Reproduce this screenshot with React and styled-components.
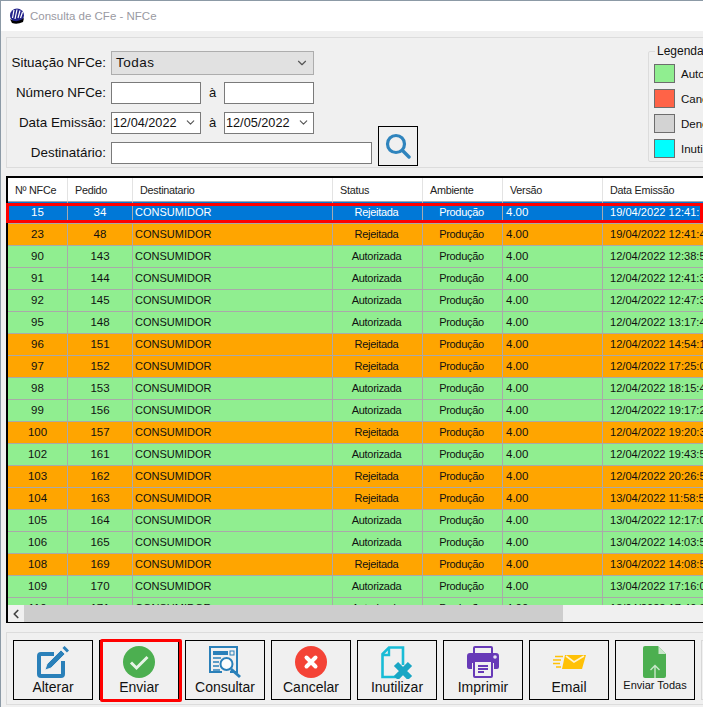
import React from "react";
import styled, { createGlobalStyle } from "styled-components";
import { FiChevronDown, FiChevronLeft } from "react-icons/fi";

const GlobalStyle = createGlobalStyle`
  html, body {
    margin: 0;
    padding: 0;
    width: 703px;
    height: 707px;
    overflow: hidden;
    background: #f0f0f0;
    font-family: "Liberation Sans", Arial, sans-serif;
  }
`;

const Window = styled.div`
  width: 703px;
  height: 707px;
  box-sizing: border-box;
  border-top: 1px solid #8c9aa6;
  border-left: 1px solid #8c9aa6;
  background: #f0f0f0;
  overflow: hidden;
`;

const TitleBar = styled.div`
  height: 30px;
  display: flex;
  align-items: center;
  gap: 5px;
  padding-left: 8px;
  background: #fff;
  font-size: 11.5px;
  color: #9a9aa2;
`;

const FilterPanel = styled.div`
  height: 131px;
  width: 720px;
  margin: 6px 0 0 5px;
  box-sizing: border-box;
  border: 1px solid #dcdcdc;
  display: flex;
  position: relative;
`;

const FilterForm = styled.div`
  display: flex;
  flex-direction: column;
  gap: 7px;
  padding: 13px 0 0 0;
`;

const FormRow = styled.div`
  display: flex;
  align-items: center;
  height: 23px;
`;

const FieldLabel = styled.label`
  width: 99px;
  margin-right: 5px;
  display: flex;
  justify-content: flex-end;
  font-size: 13.4px;
  color: #111;
  white-space: nowrap;
`;

const Select = styled.div`
  width: 203px;
  height: 24px;
  box-sizing: border-box;
  border: 1px solid #adadad;
  background: #e1e1e1;
  display: flex;
  align-items: center;
  justify-content: space-between;
  padding: 0 4px 0 4px;
  font-size: 13.5px;
  letter-spacing: 0.5px;
  color: #111;
`;

const Input = styled.div`
  width: ${({ $w }) => $w || 90}px;
  height: 22px;
  box-sizing: border-box;
  border: 1px solid #7a7a7a;
  background: #fff;
  display: flex;
  align-items: center;
  justify-content: space-between;
  padding: 0 3px 0 1px;
  font-size: 12.7px;
  color: #111;
`;

const Between = styled.span`
  width: 23px;
  text-align: center;
  font-size: 13px;
  color: #111;
`;

const SearchButton = styled.button`
  width: 40px;
  height: 40px;
  margin-left: 6px;
  margin-top: -14px;
  padding: 0;
  box-sizing: border-box;
  border: 1px solid #000;
  background: #f0f0f0;
  display: flex;
  align-items: center;
  justify-content: center;
`;

const Legend = styled.fieldset`
  position: absolute;
  left: 641px;
  top: 7px;
  width: 100px;
  height: 117px;
  margin: 0;
  padding: 0 0 0 5px;
  box-sizing: border-box;
  border: 1px solid #dcdcdc;
  border-radius: 2px;
  display: flex;
  flex-direction: column;
  gap: 6px;
`;

const LegendTitle = styled.legend`
  padding: 0 2px;
  margin-left: 1px;
  font-size: 12px;
  color: #111;
  line-height: 13px;
  white-space: nowrap;
`;

const LegendRow = styled.div`
  display: flex;
  align-items: center;
  gap: 6px;
  font-size: 11.5px;
  color: #111;
  white-space: nowrap;
  margin-top: ${({ $first }) => ($first ? 6 : 0)}px;
`;

const Swatch = styled.span`
  width: 21px;
  height: 19px;
  box-sizing: border-box;
  border: 1px solid #6d6d6d;
  background: ${({ $color }) => $color};
`;

const GridFrame = styled.div`
  width: 720px;
  height: 447px;
  margin: 8px 0 0 5px;
  box-sizing: border-box;
  border: 1px solid #000;
  border-top-width: 2px;
  border-left-width: 2px;
  display: flex;
  flex-direction: column;
  position: relative;
`;

const GridBody = styled.div`
  height: 403px;
  flex: none;
  overflow: hidden;
`;

const Row = styled.div`
  display: grid;
  grid-template-columns: 60px 65px 200px 90px 80px 100px 120px;
  height: ${({ $h }) => $h || 22}px;
  flex: none;
  box-sizing: border-box;
  font-size: 11.5px;
  color: ${({ $selected }) => ($selected ? "#fff" : "#111")};
  background: ${({ $bg }) => $bg};
`;

const HeadCell = styled.div`
  display: flex;
  align-items: center;
  padding-left: 7px;
  box-sizing: border-box;
  border-right: 1px solid #e3e3e3;
  border-bottom: 1px solid #a0a8b0;
  font-size: 10.8px;
  letter-spacing: -0.25px;
  color: #222;
  white-space: nowrap;
  overflow: hidden;
`;

const Cell = styled.div`
  display: flex;
  align-items: center;
  justify-content: ${({ $center }) => ($center ? "center" : "flex-start")};
  padding-left: ${({ $pad }) => $pad || 0}px;
  padding-bottom: 1px;
  box-sizing: border-box;
  border-right: 1px solid #a9a9a9;
  border-bottom: 1px solid #a9a9a9;
  white-space: nowrap;
  overflow: hidden;
`;

const WordCell = styled(Cell)`
  font-size: 11px;
  letter-spacing: ${({ $tight }) => ($tight ? -0.3 : 0)}px;
  padding-right: ${({ $tight }) => ($tight ? 2 : 0)}px;
`;

const DateCell = styled(Cell)`
  font-size: 11.1px;
`;

const SelectionOutline = styled.div`
  position: absolute;
  left: -2px;
  top: 25px;
  width: 697px;
  height: 20px;
  box-sizing: border-box;
  border: 3px solid #f00;
  pointer-events: none;
`;

const ScrollBar = styled.div`
  height: 17px;
  flex: none;
  display: flex;
  background: #f0f0f0;
`;

const ScrollArrow = styled.div`
  width: 16px;
  display: flex;
  align-items: center;
  justify-content: center;
  color: #444;
`;

const ScrollThumb = styled.div`
  width: 539px;
  background: #cdcdcd;
`;

const ActionPanel = styled.div`
  height: 73px;
  width: 720px;
  margin: 9px 0 0 5px;
  box-sizing: border-box;
  border: 1px solid #dcdcdc;
  padding: 7px 0 0 6px;
  display: flex;
  gap: 6px;
`;

const ActionButton = styled.button`
  width: 80px;
  height: 60px;
  flex: none;
  padding: 4px 0 0;
  box-sizing: border-box;
  border: 1px solid ${({ $ghost }) => ($ghost ? "#d8d8d8" : "#000")};
  background: #f0f0f0;
  display: flex;
  flex-direction: column;
  align-items: center;
  justify-content: flex-start;
  font-family: inherit;
  font-size: ${({ $small }) => ($small ? 11 : 14)}px;
  color: #111;
  white-space: nowrap;
  position: relative;
`;

const ActiveMark = styled.span`
  position: absolute;
  left: 0;
  top: -2px;
  width: 82px;
  height: 63px;
  box-sizing: border-box;
  border: 3px solid #f00;
  border-radius: 2px;
`;

const IconSlot = styled.div`
  height: 34px;
  display: flex;
  align-items: center;
  justify-content: center;
`;

const GREEN = "#90ee90";
const ORANGE = "#ffa500";
const BLUE = "#0078d7";

const rows = [
  [15, 34, "R", "19/04/2022 12:41:3"],
  [23, 48, "R", "19/04/2022 12:41:4"],
  [90, 143, "A", "12/04/2022 12:38:5"],
  [91, 144, "A", "12/04/2022 12:41:3"],
  [92, 145, "A", "12/04/2022 12:47:3"],
  [95, 148, "A", "12/04/2022 13:17:4"],
  [96, 151, "R", "12/04/2022 14:54:1"],
  [97, 152, "R", "12/04/2022 17:25:0"],
  [98, 153, "A", "12/04/2022 18:15:4"],
  [99, 156, "A", "12/04/2022 19:17:2"],
  [100, 157, "R", "12/04/2022 19:20:3"],
  [102, 161, "A", "12/04/2022 19:43:5"],
  [103, 162, "R", "12/04/2022 20:26:5"],
  [104, 163, "R", "13/04/2022 11:58:5"],
  [105, 164, "A", "13/04/2022 12:17:0"],
  [106, 165, "A", "13/04/2022 14:03:5"],
  [108, 169, "R", "13/04/2022 14:08:5"],
  [109, 170, "A", "13/04/2022 17:16:0"],
  [110, 171, "A", "13/04/2022 17:40:2"],
];

const columns = ["Nº NFCe", "Pedido", "Destinatario", "Status", "Ambiente", "Versão", "Data Emissão"];

const legend = [
  ["Autorizada", GREEN],
  ["Cancelada", "#ff6347"],
  ["Denegada", "#d3d3d3"],
  ["Inutilizada", "#00ffff"],
];

function AppLogo() {
  return (
    <svg width="16" height="16" viewBox="0 0 16 16">
      <circle cx="8" cy="7.500" r="7" fill="#22228a" />
      <path d="M1 11 Q8 16 15 10 L14 14 Q8 17 3 15 Z" fill="#000" />
      <path d="M5 2 L3.500 10 M8 1.500 L6 11 M11 2.500 L9 10 M13.500 4 L11.500 10" stroke="#fff" strokeWidth="1.2" fill="none" />
    </svg>
  );
}

function SearchIcon() {
  return (
    <svg width="26" height="26" viewBox="0 0 26 26" fill="none">
      <circle cx="11" cy="11" r="8.500" stroke="#2f84bd" strokeWidth="3.2" />
      <path d="M17.500 17.500 L24 24" stroke="#2f84bd" strokeWidth="3.400" strokeLinecap="round" />
    </svg>
  );
}

function EditIcon() {
  return (
    <svg width="32" height="32" viewBox="0 0 32 32" fill="none">
      <path d="M17 8 H4 Q2 8 2 10 V28 Q2 30 4 30 H24 Q26 30 26 28 V15" stroke="#2a80b9" strokeWidth="4" />
      <path d="M24 4 L10 18 L8 24 L14 22 L28 8 Z" fill="#2a80b9" stroke="#f0f0f0" strokeWidth="0.8" />
      <path d="M26.500 1 L31 5.500" stroke="#2a80b9" strokeWidth="3" />
    </svg>
  );
}

function CheckIcon() {
  return (
    <svg width="32" height="32" viewBox="0 0 32 32" fill="none">
      <circle cx="16" cy="16" r="16" fill="#4caf50" />
      <path d="M8 16.500 L13.500 22 L24.500 11" stroke="#e6f4e6" strokeWidth="3" />
    </svg>
  );
}

function ConsultIcon() {
  return (
    <svg width="33" height="33" viewBox="0 0 33 33" fill="none">
      <path d="M0 0 H29 V27 H21 V25 H27 V2 H2 V25 H13 V27 H0 Z" fill="#2a80b9" />
      <rect x="4" y="5" width="15" height="4" fill="#2a80b9" />
      <rect x="21" y="5" width="4" height="4" stroke="#2a80b9" strokeWidth="1" />
      <path d="M4 12 H12 M4 16 H10 M4 20 H10 M4 24 H11" stroke="#2a80b9" strokeWidth="1.400" />
      <circle cx="17.500" cy="18" r="6" fill="#fdfdfd" stroke="#2a80b9" strokeWidth="2" />
      <path d="M22 23 L31 31" stroke="#2a80b9" strokeWidth="3" />
    </svg>
  );
}

function CancelIcon() {
  return (
    <svg width="32" height="32" viewBox="0 0 32 32" fill="none">
      <circle cx="16" cy="16" r="16" fill="#f44336" />
      <path d="M11.500 11.500 L20.500 20.500 M20.500 11.500 L11.500 20.500" stroke="#fff" strokeWidth="4" strokeLinecap="round" />
    </svg>
  );
}

function VoidIcon() {
  return (
    <svg width="32" height="33" viewBox="0 0 32 33" fill="none">
      <path d="M22 19 V1.500 H8 L1.500 8 V31 H16" stroke="#19bcd6" strokeWidth="2.600" />
      <path d="M8 2 V9 H2" stroke="#19bcd6" strokeWidth="2.400" />
      <path d="M15 18 L29 32 M29 18 L15 32" stroke="#19a6c4" strokeWidth="6" />
    </svg>
  );
}

function PrintIcon() {
  return (
    <svg width="32" height="32" viewBox="0 0 32 32" fill="none">
      <path d="M7 7 V2 Q7 1 8 1 H24 Q25 1 25 2 V7" stroke="#673ab7" strokeWidth="2" />
      <path d="M3 7 H29 Q32 7 32 10 V21 Q32 23 30 23 H27 V17 H5 V23 H2 Q0 23 0 21 V10 Q0 7 3 7 Z" fill="#673ab7" />
      <circle cx="28" cy="11" r="1.800" fill="#e9e4f5" />
      <rect x="7" y="15" width="18" height="16" rx="1" fill="#f0f0f0" stroke="#673ab7" strokeWidth="2" />
      <path d="M11 20 H21 M11 23 H21 M11 26 H17" stroke="#673ab7" strokeWidth="1.800" />
    </svg>
  );
}

function MailIcon() {
  return (
    <svg width="33" height="16" viewBox="0 0 33 16" fill="none">
      <path d="M12 1 H33 L29 15 H9 Z" fill="#ffc107" />
      <path d="M13 2 L21 8 L31 2" stroke="#fff3d0" strokeWidth="1.600" />
      <path d="M2 2.500 H10 M0 6 H8 M0 9.500 H7 M3 13 H8" stroke="#ffc107" strokeWidth="1.400" />
    </svg>
  );
}

function SendAllIcon() {
  return (
    <svg width="24" height="32" viewBox="0 0 24 32" fill="none">
      <path d="M2 0 H15 L23 8 V30 Q23 32 21 32 H2 Q0 32 0 30 V2 Q0 0 2 0 Z" fill="#4caf50" />
      <path d="M15.500 0.500 V8 H23 Z" fill="#c9e7ca" />
      <path d="M12 32 V20 M7.500 24 L12 19.500 L16.500 24" stroke="#c9e7ca" strokeWidth="1.400" />
    </svg>
  );
}

const actions = [
  { label: "Alterar", icon: <EditIcon /> },
  { label: "Enviar", icon: <CheckIcon />, active: true },
  { label: "Consultar", icon: <ConsultIcon /> },
  { label: "Cancelar", icon: <CancelIcon /> },
  { label: "Inutilizar", icon: <VoidIcon /> },
  { label: "Imprimir", icon: <PrintIcon /> },
  { label: "Email", icon: <MailIcon /> },
  { label: "Enviar Todas", icon: <SendAllIcon />, small: true },
];

export default function App() {
  return (
    <Window>
      <GlobalStyle />
      <TitleBar>
        <AppLogo />
        Consulta de CFe - NFCe
      </TitleBar>

      <FilterPanel>
        <FilterForm>
          <FormRow>
            <FieldLabel>Situação NFCe:</FieldLabel>
            <Select>
              Todas
              <FiChevronDown size={14} color="#555" />
            </Select>
          </FormRow>
          <FormRow>
            <FieldLabel>Número NFCe:</FieldLabel>
            <Input />
            <Between>à</Between>
            <Input />
          </FormRow>
          <FormRow>
            <FieldLabel>Data Emissão:</FieldLabel>
            <Input>
              12/04/2022
              <FiChevronDown size={13} color="#555" />
            </Input>
            <Between>à</Between>
            <Input>
              12/05/2022
              <FiChevronDown size={13} color="#555" />
            </Input>
          </FormRow>
          <FormRow>
            <FieldLabel>Destinatário:</FieldLabel>
            <Input $w={261} />
            <SearchButton>
              <SearchIcon />
            </SearchButton>
          </FormRow>
        </FilterForm>
        <Legend>
          <LegendTitle>Legenda de Cores</LegendTitle>
          {legend.map(([label, color], i) => (
            <LegendRow key={label} $first={i === 0}>
              <Swatch $color={color} />
              {label}
            </LegendRow>
          ))}
        </Legend>
      </FilterPanel>

      <GridFrame>
        <Row $h={24} $bg="#fff">
          {columns.map((label) => (
            <HeadCell key={label}>{label}</HeadCell>
          ))}
        </Row>
        <GridBody>
          {rows.map(([nfce, pedido, status, date], i) => {
            const selected = i === 0;
            const bg = selected ? BLUE : status === "R" ? ORANGE : GREEN;
            return (
              <Row key={nfce} $bg={bg} $selected={selected}>
                <Cell $center>{nfce}</Cell>
                <Cell $center>{pedido}</Cell>
                <WordCell $pad={2}>CONSUMIDOR</WordCell>
                <WordCell $center $tight>
                  {status === "R" ? "Rejeitada" : "Autorizada"}
                </WordCell>
                <WordCell $center $tight>
                  Produção
                </WordCell>
                <Cell $pad={3}>4.00</Cell>
                <DateCell $pad={7}>{date}</DateCell>
              </Row>
            );
          })}
        </GridBody>
        <ScrollBar>
          <ScrollArrow>
            <FiChevronLeft size={14} strokeWidth={3} />
          </ScrollArrow>
          <ScrollThumb />
        </ScrollBar>
        <SelectionOutline />
      </GridFrame>

      <ActionPanel>
        {actions.map((action) => (
          <ActionButton key={action.label} $small={action.small}>
            <IconSlot>{action.icon}</IconSlot>
            {action.label}
            {action.active && <ActiveMark />}
          </ActionButton>
        ))}
        <ActionButton $ghost aria-hidden="true" />
      </ActionPanel>
    </Window>
  );
}
